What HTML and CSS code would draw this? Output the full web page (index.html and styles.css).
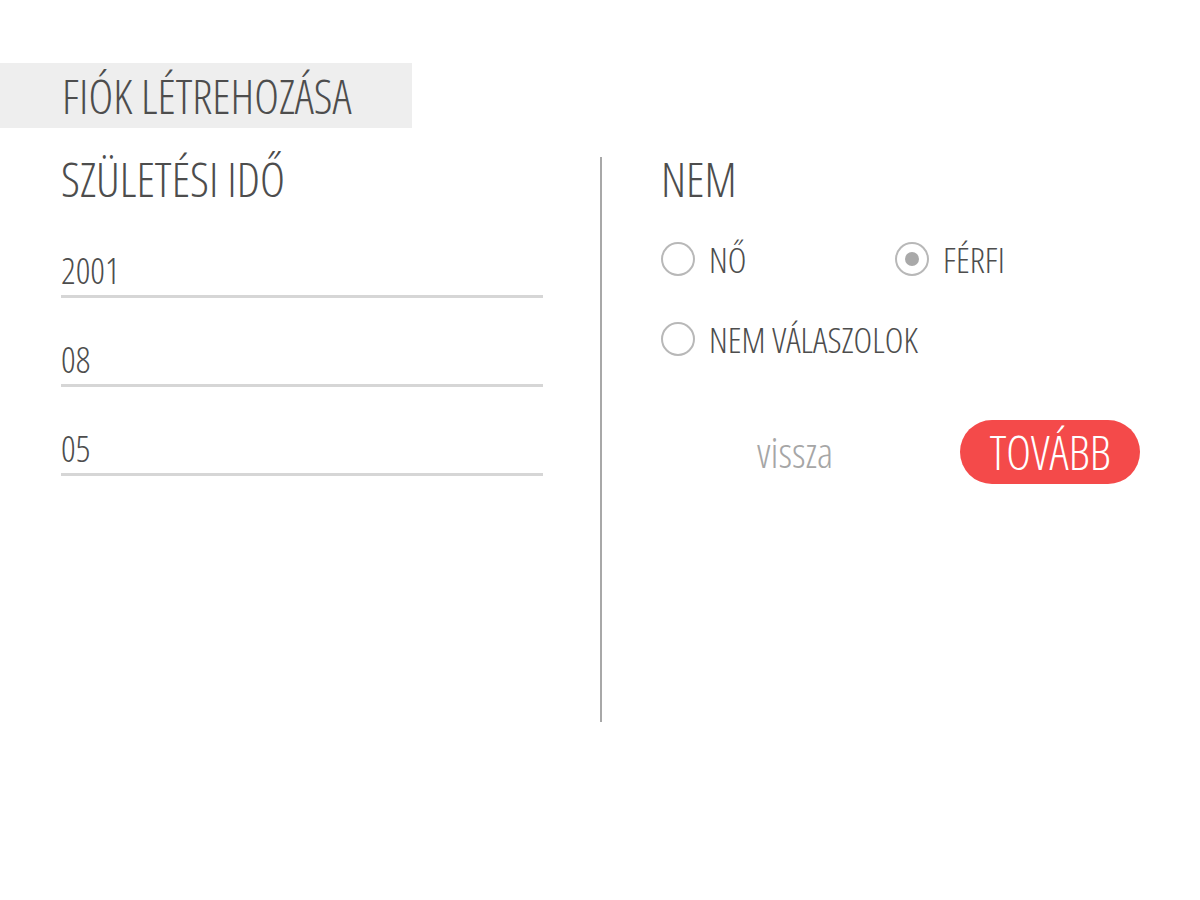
FILE: index.html
```html
<!DOCTYPE html>
<html lang="hu">
<head>
<meta charset="utf-8">
<title>Fiók létrehozása</title>
<link rel="stylesheet" href="styles.css">
</head>
<body>
<div class="header">FIÓK LÉTREHOZÁSA</div>
<div class="main">
  <div class="left">
    <div class="title">SZÜLETÉSI IDŐ</div>
    <div class="field">2001</div>
    <div class="field">08</div>
    <div class="field">05</div>
  </div>
  <div class="divider"></div>
  <div class="right">
    <div class="title">NEM</div>
    <div class="radios">
      <label class="radio"><span class="circle"></span>NŐ</label>
      <label class="radio"><span class="circle checked"></span>FÉRFI</label>
      <label class="radio wide"><span class="circle"></span>NEM VÁLASZOLOK</label>
    </div>
    <div class="actions">
      <span class="back">vissza</span>
      <span class="next">TOVÁBB</span>
    </div>
  </div>
</div>
</body>
</html>
```
FILE: styles.css
```css
body {
  margin: 0;
  font-family: "Open Sans", "DejaVu Sans", sans-serif;
  font-stretch: 75%;
  font-weight: 300;
  color: #4d4d4d;
  background: #fff;
}
.header {
  box-sizing: border-box;
  margin-top: 63px;
  width: 412px;
  height: 65px;
  padding-left: 62px;
  padding-top: 1px;
  background: #eeeeee;
  font-size: 47px;
  line-height: 65px;
}
.main {
  display: flex;
  margin-top: 29px;
}
.left {
  width: 482px;
  padding-left: 61px;
}
.title {
  font-size: 47.5px;
  line-height: 44px;
}
.field {
  font-size: 36px;
  line-height: 44px;
  padding-bottom: 2px;
  margin-top: 40px;
  border-bottom: 3px solid #d6d6d6;
}
.left .title + .field {
  margin-top: 48px;
}
.divider {
  width: 2px;
  height: 565px;
  margin-left: 57px;
  background: #a8a8a8;
}
.right {
  padding-left: 59px;
  flex: 1;
}
.radios {
  display: flex;
  flex-wrap: wrap;
  margin-top: 40px;
  row-gap: 44px;
}
.radio {
  display: flex;
  align-items: center;
  gap: 14px;
  width: 234px;
  font-size: 35.5px;
  line-height: 36px;
}
.radio.wide {
  width: auto;
}
.circle {
  box-sizing: border-box;
  width: 34px;
  height: 34px;
  border: 2px solid #b8b8b8;
  border-radius: 50%;
  display: flex;
  align-items: center;
  justify-content: center;
}
.circle.checked::after {
  content: "";
  width: 14px;
  height: 14px;
  border-radius: 50%;
  background: #a9a9a9;
}
.actions {
  display: flex;
  align-items: center;
  margin-top: 63px;
}
.back {
  margin-left: 96px;
  font-size: 42px;
  line-height: 50px;
  color: #a6a6a6;
}
.next {
  margin-left: 127px;
  width: 180px;
  height: 64px;
  border-radius: 32px;
  background: #f44a4a;
  color: #fff;
  font-size: 47px;
  line-height: 64px;
  text-align: center;
}
```
